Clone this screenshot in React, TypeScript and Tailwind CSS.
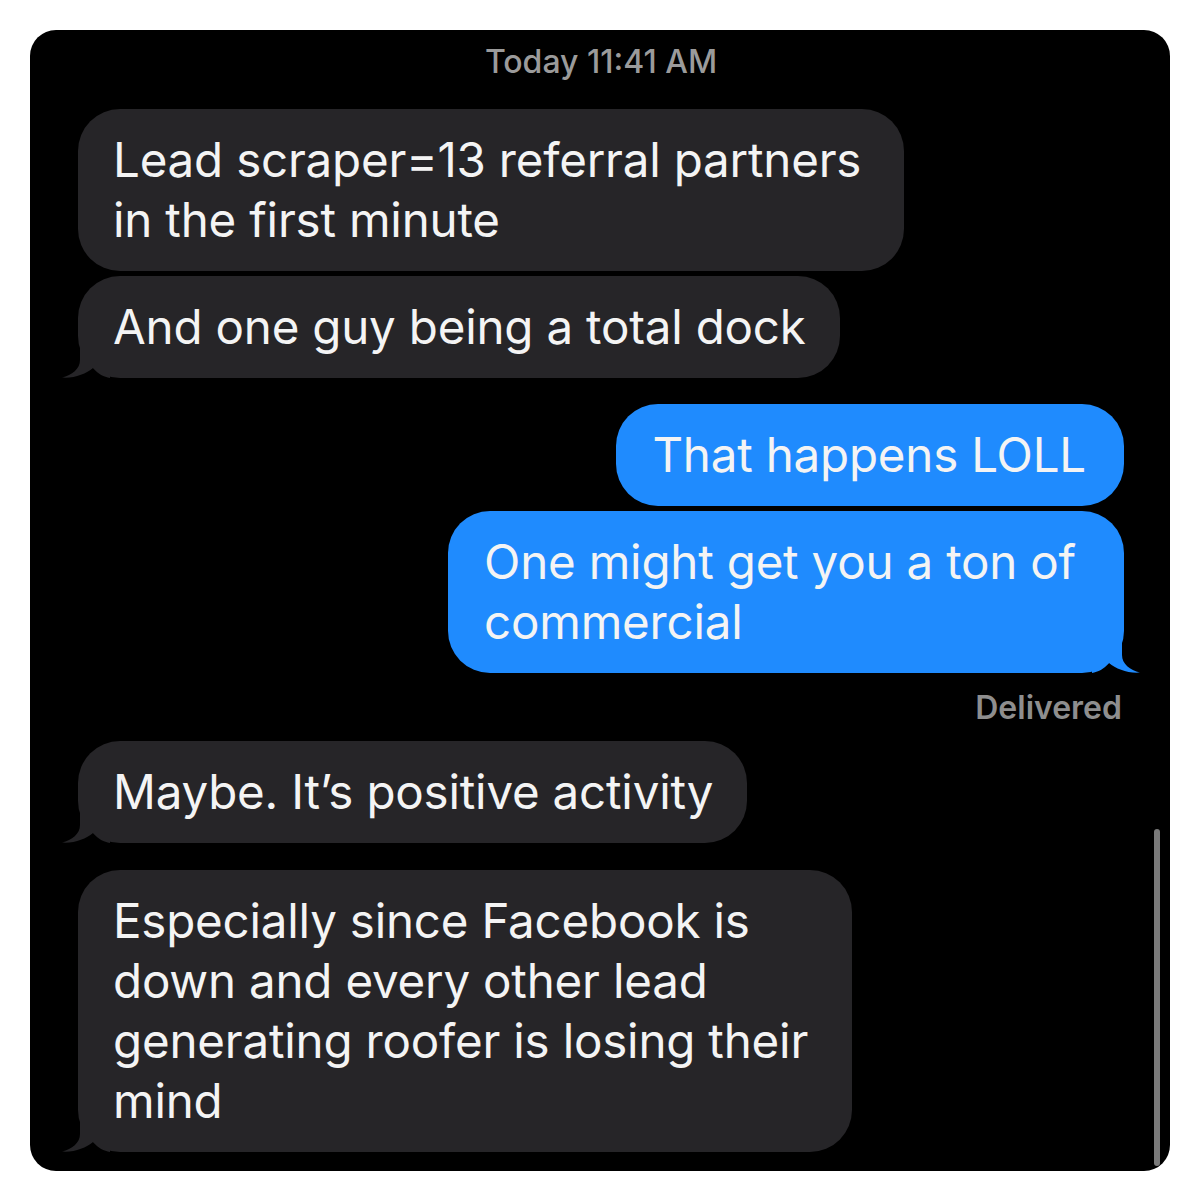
import React from 'react';

type Side = 'in' | 'out';

// iMessage style tail, drawn pointing to the bottom-left; mirrored for outgoing
function Tail({ side, color }: { side: Side; color: string }) {
  return (
    <svg
      width="50"
      height="40"
      viewBox="0 0 50 40"
      className={
        side === 'in'
          ? 'absolute left-[-18px] bottom-0'
          : 'absolute right-[-18px] bottom-0 -scale-x-100'
      }
    >
      <path
        d="M20 0 L20 22 C20 31 12 37 2 39.5 C14 40.5 26 36 33 30 C38 36 44 39 50 40 L50 0 Z"
        fill={color}
      />
    </svg>
  );
}

function Bubble({
  side,
  lines,
  tail = false,
  padRight,
}: {
  side: Side;
  lines: string[];
  tail?: boolean;
  padRight: string;
}) {
  const color = side === 'in' ? '#262528' : '#1f8bfe';
  return (
    <div className={side === 'in' ? 'flex justify-start' : 'flex justify-end'}>
      <div
        className={
          (side === 'in'
            ? 'relative w-fit rounded-[42px] bg-[#262528] pl-[35px] py-[21px] '
            : 'relative w-fit rounded-[42px] bg-[#1f8bfe] pl-[36px] py-[21px] ') + padRight
        }
      >
        {tail && <Tail side={side} color={color} />}
        <p className="relative text-[47.5px] leading-[60px] text-[#f4f4f4] whitespace-nowrap tracking-[-0.2px]">
          {lines.map((l, i) => (
            <span key={i} className="block">
              {l}
            </span>
          ))}
        </p>
      </div>
    </div>
  );
}

export default function App() {
  return (
    <div className="w-[1200px] h-[1200px] bg-white p-[30px] font-['Inter','Noto_Sans',sans-serif]">
      <div className="relative w-[1140px] h-[1141px] bg-black rounded-[26px] overflow-hidden pl-[48px] pr-[46px] pt-[14px]">
        <div className="text-center text-[32px] leading-[36px] font-medium text-[#9b9b9b]">
          Today 11:41 AM
        </div>

        <div className="mt-[29px] flex flex-col">
          <Bubble
            side="in"
            padRight="pr-[43px]"
            lines={['Lead scraper=13 referral partners', 'in the first minute']}
          />
          <div className="h-[5px]" />
          <Bubble side="in" tail padRight="pr-[34px]" lines={['And one guy being a total dock']} />
          <div className="h-[26px]" />
          <Bubble side="out" padRight="pr-[38px]" lines={['That happens LOLL']} />
          <div className="h-[5px]" />
          <Bubble
            side="out"
            tail
            padRight="pr-[48px]"
            lines={['One might get you a ton of', 'commercial']}
          />
          <div className="mt-[17px] text-right pr-[2px] text-[32px] leading-[36px] font-semibold text-[#8e8e8e]">
            Delivered
          </div>
          <div className="h-[15px]" />
          <Bubble side="in" tail padRight="pr-[34px]" lines={["Maybe. It\u2019s positive activity"]} />
          <div className="h-[27px]" />
          <Bubble
            side="in"
            tail
            padRight="pr-[44px]"
            lines={[
              'Especially since Facebook is',
              'down and every other lead',
              'generating roofer is losing their',
              'mind',
            ]}
          />
        </div>

        {/* scroll indicator */}
        <div className="absolute right-[10px] top-[799px] w-[6px] h-[337px] rounded-full bg-[#7a7a7a]" />
      </div>
    </div>
  );
}
